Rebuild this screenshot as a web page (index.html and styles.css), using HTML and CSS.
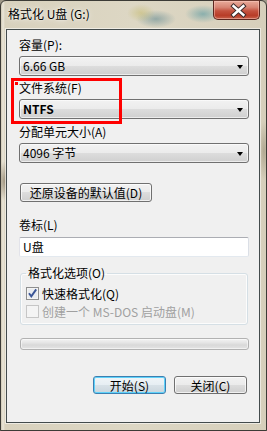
FILE: index.html
```html
<!DOCTYPE html>
<html lang="zh-CN">
<head>
<meta charset="utf-8">
<title>格式化 U盘 (G:)</title>
<link rel="stylesheet" href="styles.css">
</head>
<body>
<div class="window">
  <div class="titlebar">
    <span class="title">格式化 U盘 (G:)</span>
    <button class="close" aria-label="关闭">
      <svg width="46" height="19" viewBox="0 0 46 19">
        <path d="M20 5 L30 14 M30 5 L20 14" stroke="#3a2a2a" stroke-width="4.6" stroke-linecap="square" fill="none"/>
        <path d="M20 5 L30 14 M30 5 L20 14" stroke="#ffffff" stroke-width="2.6" stroke-linecap="square" fill="none"/>
      </svg>
    </button>
  </div>
  <div class="client">
    <div class="label first">容量(P):</div>
    <div class="combo"><span>6.66 GB</span><i class="arrow"></i></div>
    <div class="label">文件系统(F)</div>
    <div class="combo"><span class="bold">NTFS</span><i class="arrow"></i></div>
    <div class="label l3">分配单元大小(A)</div>
    <div class="combo"><span>4096 字节</span><i class="arrow"></i></div>
    <button class="btn reset">还原设备的默认值(D)</button>
    <div class="label l4">卷标(L)</div>
    <div class="textbox">U盘</div>
    <fieldset class="group">
      <legend>格式化选项(O)</legend>
      <div class="check-row">
        <span class="check">
          <svg width="13" height="13" viewBox="0 0 13 13">
            <rect x="0.5" y="0.5" width="12" height="12" fill="#f4f4f4" stroke="#8e8f8f"/>
            <rect x="2" y="2" width="9" height="9" fill="#e9ecef"/>
            <path d="M3 6.2 L5.3 9.3 L10.2 2.4" stroke="#3a5596" stroke-width="1.9" fill="none"/>
          </svg>
        </span>
        <span>快速格式化(Q)</span>
      </div>
      <div class="check-row disabled">
        <span class="check">
          <svg width="13" height="13" viewBox="0 0 13 13">
            <rect x="0.5" y="0.5" width="12" height="12" fill="#f4f4f4" stroke="#c6c6c6"/>
          </svg>
        </span>
        <span>创建一个 MS-DOS 启动盘(M)</span>
      </div>
    </fieldset>
    <div class="progress"></div>
    <div class="actions">
      <button class="btn default">开始(S)</button>
      <button class="btn">关闭(C)</button>
    </div>
    <div class="mark"></div>
  </div>
</div>
</body>
</html>
```
FILE: styles.css
```css
html, body {
  margin: 0;
  padding: 0;
}
body {
  width: 267px;
  height: 431px;
  overflow: hidden;
  background: #9e9888;
  font-family: "Noto Sans CJK SC", "Liberation Sans", sans-serif;
  font-size: 12px;
  color: #000;
}
.window {
  box-sizing: border-box;
  width: 267px;
  height: 431px;
  border: 1px solid #3c3b36;
  border-radius: 6px 6px 0 0;
  padding: 0 6px 7px 5px;
  display: flex;
  flex-direction: column;
  background:
    radial-gradient(ellipse 14px 9px at 140px 12px, rgba(196, 186, 110, 0.55), rgba(196, 186, 110, 0)),
    radial-gradient(ellipse 20px 9px at 155px 18px, rgba(110, 145, 150, 0.65), rgba(110, 145, 150, 0)),
    radial-gradient(ellipse 18px 9px at 202px 13px, rgba(105, 160, 165, 0.7), rgba(105, 160, 165, 0)),
    radial-gradient(ellipse 5px 20px at 3px 180px, rgba(110, 95, 70, 0.55), rgba(110, 95, 70, 0)),
    radial-gradient(ellipse 6px 30px at 263px 150px, rgba(140, 130, 105, 0.5), rgba(140, 130, 105, 0)),
    linear-gradient(90deg, #cfc8b4 0, #ebe7da 2px, #d8d1bd 4px, #ddd7c4 50%, #d6cfbb 100%);
}
.titlebar {
  height: 28px;
  display: flex;
  justify-content: space-between;
  align-items: flex-start;
  flex: none;
}
.title {
  margin: 5px 0 0 2px;
  line-height: 16px;
  font-size: 12px;
  text-shadow: 0 0 6px rgba(255, 255, 255, 0.9), 0 0 2px rgba(255, 255, 255, 0.8);
}
.close {
  margin: -1px 0 0 0;
  padding: 0;
  width: 47px;
  height: 20px;
  box-sizing: border-box;
  border: 1px solid #5c2720;
  border-top-color: #6a3a30;
  border-radius: 0 0 5px 5px;
  background: linear-gradient(#e9ab9b 0%, #d78574 35%, #c4523f 55%, #b83c28 80%, #c8624c 100%);
  box-shadow: inset 0 0 0 1px rgba(255, 210, 200, 0.45);
  display: flex;
  align-items: center;
  justify-content: center;
}
.close svg {
  display: block;
}
.client {
  position: relative;
  flex: 1;
  box-sizing: border-box;
  background: #f0f0f0;
  border: 1px solid #434b4c;
  box-shadow: 0 0 0 1px rgba(255, 255, 255, 0.55);
  padding: 0 10px 0 12px;
  display: flex;
  flex-direction: column;
}
.label {
  line-height: 16px;
  height: 16px;
  margin-top: 4px;
  white-space: nowrap;
}
.label.first {
  margin-top: 7px;
}
.label.l3 {
  margin-top: 5px;
}
.label.l4 {
  margin-top: 15px;
}
.combo {
  margin-top: 3px;
  height: 20px;
  box-sizing: border-box;
  border: 1px solid #707070;
  border-radius: 3px;
  background: linear-gradient(#f2f2f2 0%, #ebebeb 50%, #dddddd 50%, #cfcfcf 100%);
  box-shadow: inset 0 0 0 1px rgba(255, 255, 255, 0.6);
  display: flex;
  align-items: center;
  justify-content: space-between;
  padding: 0 5px 0 3px;
  line-height: 16px;
}
.combo .bold {
  font-weight: bold;
}
.arrow {
  width: 0;
  height: 0;
  border-left: 3.5px solid transparent;
  border-right: 3.5px solid transparent;
  border-top: 4px solid #000;
  margin-top: 1px;
}
.btn {
  font-family: "Noto Sans CJK SC", "Liberation Sans", sans-serif;
  font-size: 12px;
  color: #000;
  line-height: 15px;
  padding: 0;
  box-sizing: border-box;
  border: 1px solid #707070;
  border-radius: 3px;
  background: linear-gradient(#f2f2f2 0%, #ebebeb 50%, #dddddd 50%, #cfcfcf 100%);
  box-shadow: inset 0 0 0 1px rgba(255, 255, 255, 0.7);
}
.reset {
  align-self: flex-start;
  margin: 20px 0 0 1px;
  width: 132px;
  height: 19px;
}
.textbox {
  margin-top: 4px;
  height: 20px;
  box-sizing: border-box;
  border: 1px solid #abadb3;
  border-top-color: #abadb3;
  border-left-color: #e2e3ea;
  border-right-color: #dbdfe6;
  border-bottom-color: #e3e9ef;
  border-radius: 2px;
  background: #fff;
  padding: 0 3px;
  line-height: 18px;
}
.group {
  margin: 8px 1px 0 1px;
  padding: 5px 5px 5px 5px;
  border: 1px solid #d5dfe5;
  border-radius: 3px;
  box-shadow: inset 0 0 0 1px rgba(255, 255, 255, 0.8);
  min-width: 0;
}
.group legend {
  padding: 0 2px;
  line-height: 16px;
}
.check-row {
  display: flex;
  align-items: center;
  gap: 3px;
  height: 15px;
  line-height: 15px;
  white-space: nowrap;
}
.check-row + .check-row {
  margin-top: 3px;
}
.check {
  width: 13px;
  height: 13px;
  flex: none;
}
.check svg {
  display: block;
}
.disabled {
  color: #a0a0a0;
}
.progress {
  margin: 13px 0 0 1px;
  height: 12px;
  box-sizing: border-box;
  border: 1px solid #b2b2b2;
  border-radius: 3px;
  background: linear-gradient(#f3f3f3 0%, #e6e6e6 35%, #d9d9d9 60%, #e4e4e4 100%);
  box-shadow: inset 0 0 0 1px rgba(255, 255, 255, 0.5);
}
.actions {
  margin: 26px 2px 0 0;
  display: flex;
  justify-content: flex-end;
  gap: 8px;
}
.actions .btn {
  width: 73px;
  height: 18px;
}
.actions .default {
  border-color: #3c7fb1;
  box-shadow: inset 0 0 0 1px #5fd2fa;
  background: linear-gradient(#f0f5f8 0%, #e6eef3 50%, #d8e2e8 50%, #cad6dd 100%);
}
.mark {
  position: absolute;
  left: 4px;
  top: 48px;
  width: 111px;
  height: 46px;
  box-sizing: border-box;
  border: 3px solid #ff0000;
  pointer-events: none;
}
.mark::after {
  content: "";
  position: absolute;
  left: 1px;
  top: 1px;
  width: 3px;
  height: 3px;
  background: #ff0000;
}
```
